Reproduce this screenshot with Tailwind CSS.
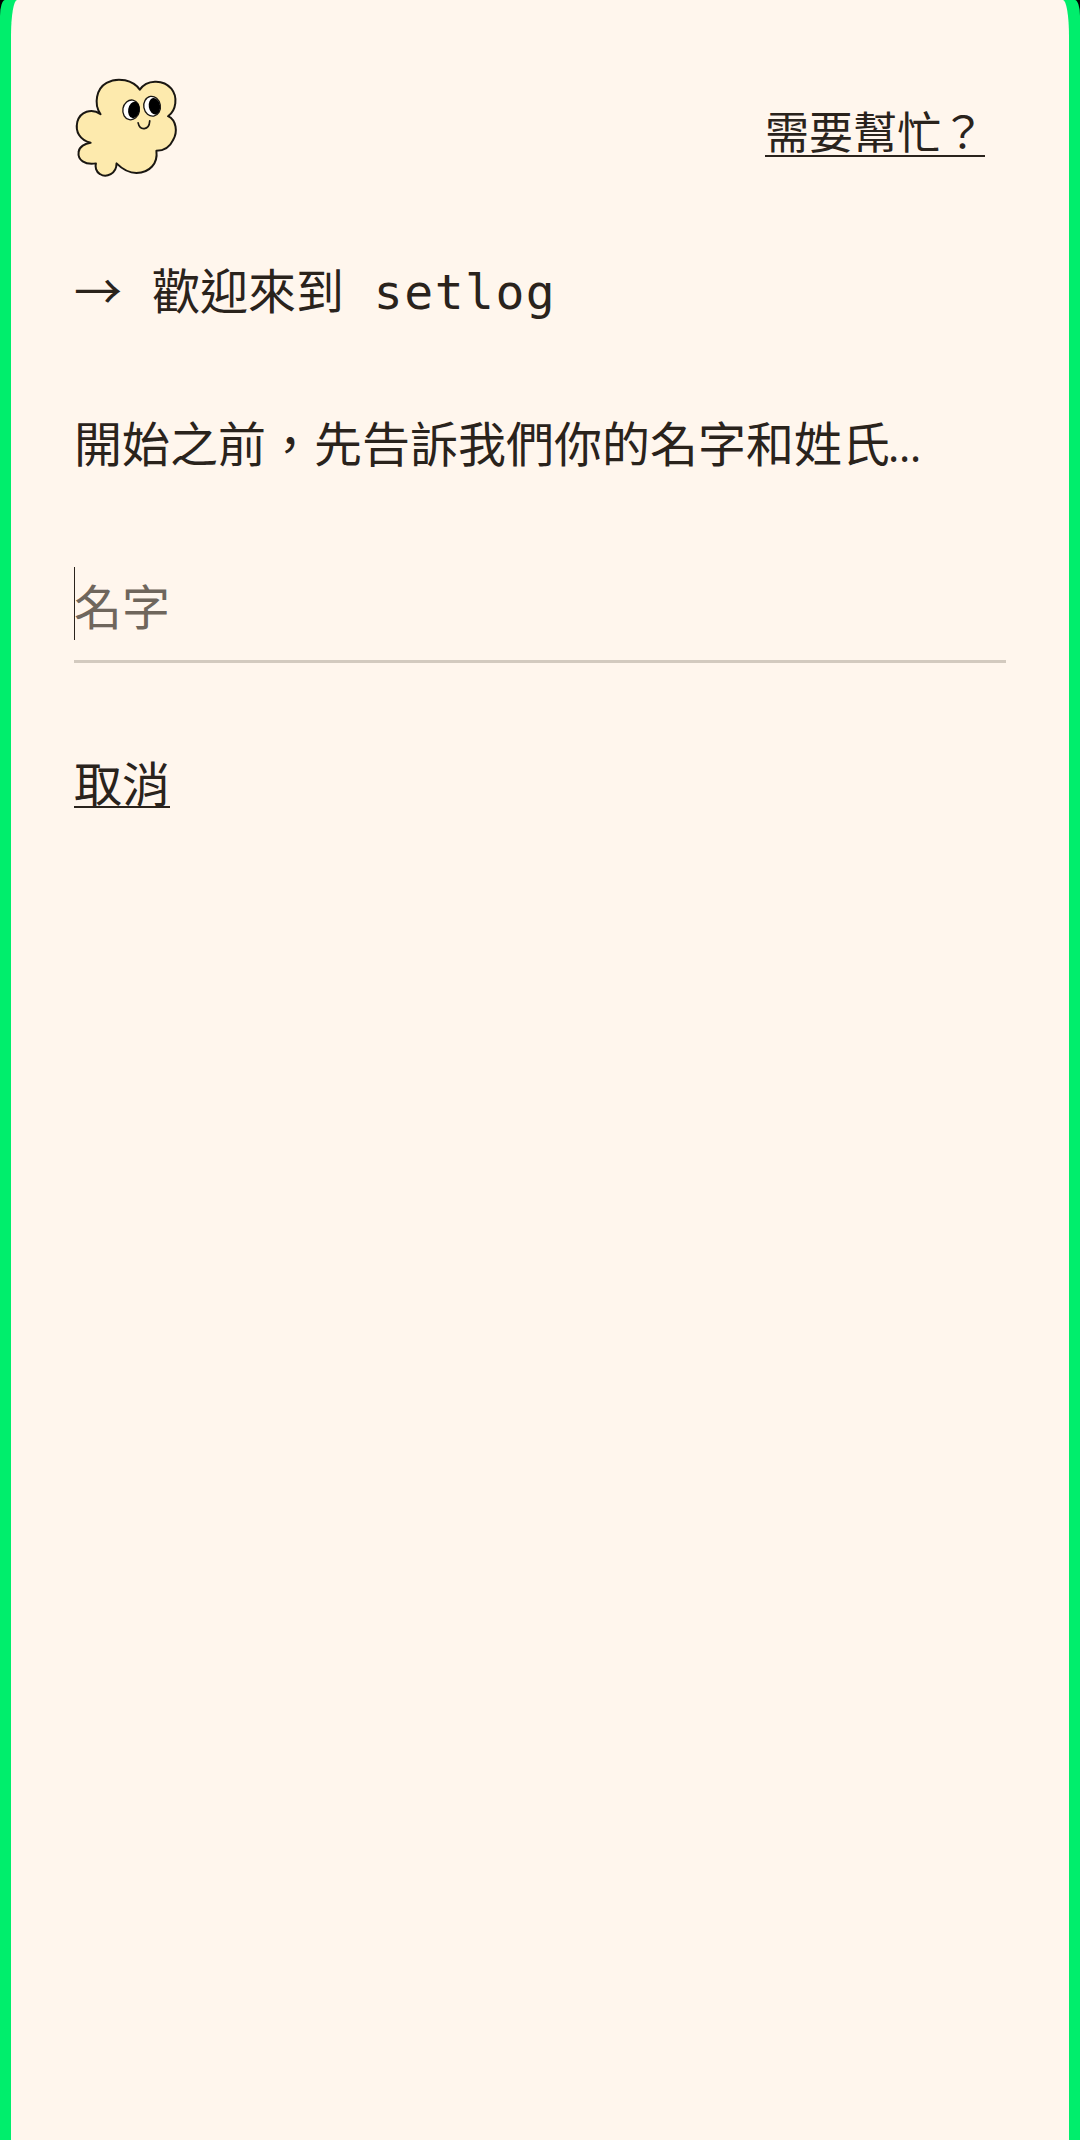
<!DOCTYPE html>
<html lang="zh-Hant">
<head>
    <meta charset="UTF-8">
    <meta name="viewport" content="width=device-width, initial-scale=1.0">
    <title>setlog</title>
    <script src="https://cdn.jsdelivr.net/npm/@tailwindcss/browser@4"></script>
</head>
<body class="bg-black h-[2140px] w-[1080px] overflow-hidden font-['Noto_Sans','Noto_Sans_CJK_TC',sans-serif] text-[#2a231c]">
    <div class="bg-[#00ee6c] h-[2140px] px-[11px] rounded-t-[5px_16px]">
        <div class="bg-[#fff6ed] h-[2140px] rounded-t-[6px_36px] pl-[63px] pr-[63px]">
            <!-- Header -->
            <div class="flex items-start justify-between h-[178px]">
                <svg class="mt-[77px] -ml-[1px] w-[107px] h-[103px]" viewBox="220 230 320 310" fill="none">
                    <path d="M420 268C440 238 490 235 515 265C535 290 530 330 505 348C530 360 535 395 520 420C510 442 490 452 470 452C475 490 450 518 410 519C385 519 365 505 350 490C350 520 320 535 300 522C288 515 285 500 288 490C255 495 232 480 236 455C238 440 255 430 272 428C240 420 225 395 232 365C240 335 275 322 302 342C280 310 290 265 320 248C355 228 400 240 420 268Z" fill="#fdeaad" stroke="#1a1712" stroke-width="6" stroke-linejoin="round"/>
                    <ellipse cx="394" cy="329" rx="25" ry="30" fill="#fff" stroke="#1a1712" stroke-width="4" transform="rotate(10 394 329)"/>
                    <ellipse cx="402" cy="329" rx="17" ry="25" fill="#000" transform="rotate(10 402 329)"/>
                    <ellipse cx="457" cy="318" rx="25" ry="30" fill="#fff" stroke="#1a1712" stroke-width="4" transform="rotate(-10 457 318)"/>
                    <ellipse cx="464" cy="318" rx="17" ry="25" fill="#000" transform="rotate(-10 464 318)"/>
                    <path d="M415 368C420 392 448 392 450 362" stroke="#1a1712" stroke-width="5" stroke-linecap="round"/>
                </svg>
                <a class="mt-[102px] mr-[21px] text-[44px] leading-[60px] h-[55px] border-b-2 border-[#2a231c] whitespace-pre">需要幫忙？</a>
            </div>
            <!-- Title -->
            <h1 class="mt-[80px] h-[60px] text-[48px] leading-[60px] font-normal whitespace-pre font-['DejaVu_Sans_Mono','Noto_Sans_CJK_TC',monospace]"><span class="mr-[1px] font-['Noto_Sans_CJK_TC']">→</span> 歡迎來到 <span class="pl-[1px] tracking-[1.5px]">setlog</span></h1>
            <p class="mt-[96px] h-[60px] text-[48px] leading-[60px] whitespace-pre">開始之前，先告訴我們你的名字和姓氏<span class="-ml-[2px] text-[42px]">…</span></p>
            <!-- Name input -->
            <div class="relative mt-[93px] h-[96px] border-b-[3px] border-[#d3cabf]">
                <span class="absolute left-0 top-0 w-[1px] h-[73px] bg-[#2a231c]"></span>
                <input type="text" placeholder="名字" class="w-full h-[73px] pt-[5px] text-[48px] outline-none bg-transparent placeholder:text-[#6f665c]">
            </div>
            <a class="inline-block mt-[91px] text-[48px] leading-[60px] h-[54px] border-b-2 border-[#2a231c]">取消</a>
        </div>
    </div>
</body>
</html>
